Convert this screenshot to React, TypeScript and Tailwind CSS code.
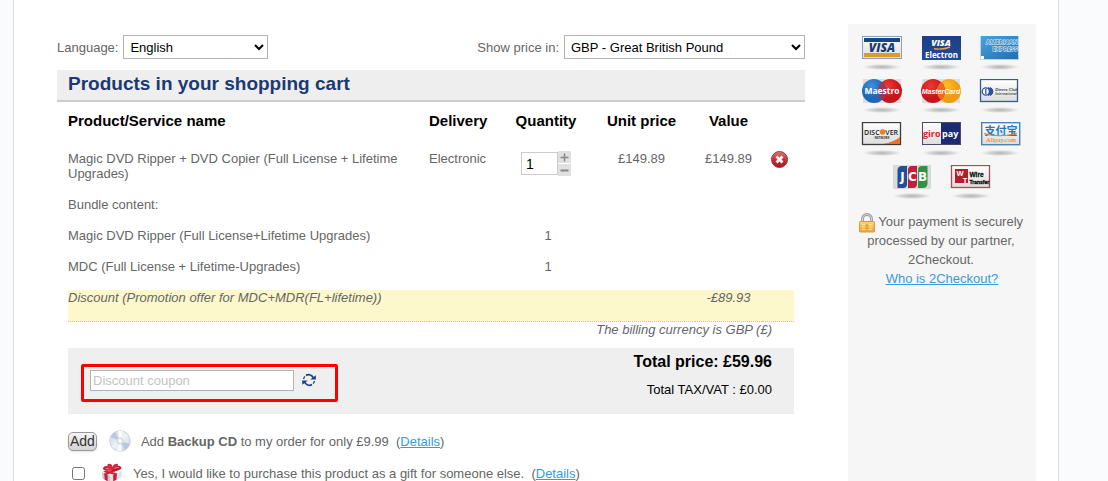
import React from "react";

function CardDefs() {
  return (
    <svg aria-hidden="true" width="0" height="0" className="absolute">
      <defs>
        <radialGradient id="card-shadow">
          <stop offset="0" stopColor="#9a9a9a" stopOpacity="0.75" />
          <stop offset="0.6" stopColor="#b4b4b4" stopOpacity="0.45" />
          <stop offset="1" stopColor="#d0d0d0" stopOpacity="0" />
        </radialGradient>
        <linearGradient id="card-face" x1="0" y1="0" x2="0" y2="1">
          <stop offset="0" stopColor="#ffffff" />
          <stop offset="1" stopColor="#dcdcdc" />
        </linearGradient>
        <linearGradient id="card-navy" x1="0" y1="0" x2="0" y2="1">
          <stop offset="0" stopColor="#1b3f85" />
          <stop offset="1" stopColor="#254a94" />
        </linearGradient>
        <radialGradient id="card-red" cx="0.4" cy="0.3">
          <stop offset="0" stopColor="#f03a34" />
          <stop offset="1" stopColor="#c4161c" />
        </radialGradient>
        <radialGradient id="card-blue" cx="0.4" cy="0.3">
          <stop offset="0" stopColor="#3f90e0" />
          <stop offset="1" stopColor="#1d66b8" />
        </radialGradient>
        <radialGradient id="card-amber" cx="0.4" cy="0.3">
          <stop offset="0" stopColor="#ffbe2e" />
          <stop offset="1" stopColor="#f09a10" />
        </radialGradient>
        <linearGradient id="amex-face" x1="0" y1="0" x2="1" y2="1">
          <stop offset="0" stopColor="#4ba3dd" />
          <stop offset="1" stopColor="#1f6fb4" />
        </linearGradient>
      </defs>
    </svg>
  );
}

function Card({ name, children }: { name: string; children: React.ReactNode }) {
  return (
    <svg role="img" aria-label={name} width="42" height="35" viewBox="0 0 42 35" fontFamily="'Open Sans', sans-serif">
      <ellipse cx="21" cy="31" rx="20" ry="3.2" fill="url(#card-shadow)" />
      {children}
    </svg>
  );
}

function Visa() {
  return (
    <Card name="Visa">
      <rect x="1.5" y="0.5" width="39" height="22" fill="url(#card-face)" stroke="#8e9db8" />
      <rect x="3" y="2" width="36" height="4" fill="#1c4484" />
      <rect x="3" y="17" width="36" height="4" fill="#e39a22" />
      <text x="21" y="15.8" fontSize="12" fontWeight="800" fontStyle="italic" fill="#1c3a72" textAnchor="middle">VISA</text>
    </Card>
  );
}

function VisaElectron() {
  return (
    <Card name="Visa Electron">
      <rect x="2" y="0" width="39" height="24" fill="url(#card-navy)" />
      <text x="21" y="10" fontSize="9" fontWeight="800" fontStyle="italic" fill="#fff" textAnchor="middle">VISA</text>
      <path d="M14 12.8 Q23 14 30 11" stroke="#e8a33a" strokeWidth="1.4" fill="none" />
      <text x="21.5" y="21.8" fontSize="8" fontWeight="700" fill="#fff" textAnchor="middle">Electron</text>
    </Card>
  );
}

function Amex() {
  return (
    <Card name="American Express">
      <rect x="1" y="0" width="39" height="24" fill="#b9d4e8" />
      <rect x="2" y="0" width="37" height="23" fill="url(#amex-face)" />
      <text x="23" y="8" fontSize="6" fontWeight="700" fill="#2f87c6" stroke="#e8f4fc" strokeWidth="0.9" paintOrder="stroke" textAnchor="middle">AMERICAN</text>
      <text x="26" y="15" fontSize="6" fontWeight="700" fill="#2f87c6" stroke="#e8f4fc" strokeWidth="0.9" paintOrder="stroke" textAnchor="middle">EXPRESS</text>
      <rect x="2" y="20" width="3" height="3" fill="#fff" />
    </Card>
  );
}

function Maestro() {
  return (
    <Card name="Maestro">
      <rect x="2" y="0" width="38" height="24" fill="#dedede" />
      <circle cx="29" cy="12" r="12" fill="url(#card-red)" />
      <circle cx="13" cy="12" r="12" fill="url(#card-blue)" />
      <path d="M21 3 A12 12 0 0 1 21 21 A12 12 0 0 1 21 3" fill="#7a4078" />
      <path d="M17.5 6 H24 M17 9 H24.5 M17.5 18 H24" stroke="#d22a30" />
      <text x="21" y="15" fontSize="8.5" fontWeight="700" fill="#fff" textAnchor="middle">Maestro</text>
    </Card>
  );
}

function MasterCard() {
  return (
    <Card name="MasterCard">
      <rect x="2" y="0" width="38" height="24" fill="#dedede" />
      <circle cx="29" cy="12" r="12" fill="url(#card-amber)" />
      <circle cx="13" cy="12" r="12" fill="url(#card-red)" />
      <path d="M21 3 A12 12 0 0 1 21 21 A12 12 0 0 1 21 3" fill="#ec6a22" />
      <text x="21" y="15" fontSize="7" fontWeight="700" fontStyle="italic" fill="#fff" textAnchor="middle" fontFamily="'Liberation Sans', sans-serif">MasterCard</text>
    </Card>
  );
}

function Diners() {
  return (
    <Card name="Diners Club International">
      <rect x="1.5" y="0.5" width="37" height="22" fill="url(#card-face)" stroke="#3a5b92" strokeWidth="1.3" />
      <circle cx="6.8" cy="12.5" r="3.6" fill="#fff" stroke="#2a559c" strokeWidth="1.3" />
      <path d="M6.8 10 V15" stroke="#2a559c" strokeWidth="1.3" />
      <path d="M9.5 8.5 A4.8 4.8 0 0 1 9.5 16.5 Q12 12.5 9.5 8.5 M11 8.5 A4.2 4.2 0 0 1 11 16.5 Z" fill="#2a559c" stroke="#2a559c" />
      <text x="27.5" y="12" fontSize="4" fontStyle="italic" fontWeight="700" fill="#444" textAnchor="middle" fontFamily="'Liberation Sans', sans-serif">Diners Club</text>
      <text x="27" y="16" fontSize="3.6" fontStyle="italic" fontWeight="700" fill="#555" textAnchor="middle" fontFamily="'Liberation Sans', sans-serif">International</text>
    </Card>
  );
}

function Discover() {
  return (
    <Card name="Discover Network">
      <rect x="1.5" y="0.5" width="38" height="22" fill="url(#card-face)" stroke="#3c3c3c" strokeWidth="1.3" />
      <path d="M39 15 Q34 19.5 22 22 H39 Z" fill="#e8742a" />
      <text x="18.6" y="12.5" fontSize="7" fontWeight="600" fill="#222" textAnchor="end">DISC</text>
      <circle cx="21.6" cy="10" r="2.8" fill="#ee7d22" />
      <text x="24.3" y="12.5" fontSize="7" fontWeight="600" fill="#222">VER</text>
      <text x="21" y="16.5" fontSize="3" fontWeight="700" fill="#333" textAnchor="middle">NETWORK</text>
    </Card>
  );
}

function Giropay() {
  return (
    <Card name="giropay">
      <rect x="2.5" y="0.5" width="38" height="22" fill="url(#card-face)" stroke="#4a4a66" />
      <rect x="21" y="1" width="19" height="21" fill="#1c2a72" />
      <text x="20.5" y="15" fontSize="9" fontWeight="700" fill="#dc2430" textAnchor="end">giro</text>
      <text x="22" y="15" fontSize="9" fontWeight="700" fill="#fff">pay</text>
    </Card>
  );
}

function Alipay() {
  return (
    <Card name="Alipay">
      <rect x="2.7" y="0.7" width="38" height="22" fill="url(#card-face)" stroke="#4a82c0" strokeWidth="1.4" />
      <text x="22" y="12.5" fontSize="11" fontWeight="700" fill="#2478c0" textAnchor="middle" fontFamily="'Noto Sans CJK SC', sans-serif">支付宝</text>
      <path d="M5 11.5 Q20 16 38 11.5" stroke="#ee8128" strokeWidth="1.2" fill="none" />
      <text x="22" y="20.3" fontSize="6.5" fill="#e3751e" textAnchor="middle" fontFamily="'Liberation Serif', serif">Alipay.com</text>
    </Card>
  );
}

function Jcb() {
  return (
    <Card name="JCB">
      <rect x="2" y="0" width="38" height="24" fill="#dadada" />
      <path d="M6.5 23 V5 Q7 1 11 1 H16 V19 Q16 23 12 23 Z" fill="#1f4f96" />
      <path d="M17 23 V5 Q17 1 21 1 H26 V19 Q26 23 22 23 Z" fill="#c21f3c" />
      <path d="M27 23 V5 Q27 1 31 1 H36.5 V19 Q36 23 32 23 Z" fill="#2f9440" />
      <g fontSize="12" fontWeight="700" fill="#fff" textAnchor="middle" fontFamily="'DejaVu Sans', sans-serif">
        <text x="11.5" y="16">J</text>
        <text x="21.5" y="16">C</text>
        <text x="31.5" y="16">B</text>
      </g>
    </Card>
  );
}

function WireTransfer() {
  return (
    <Card name="Wire Transfer">
      <rect x="1.5" y="0.5" width="38" height="22" fill="url(#card-face)" stroke="#b04858" strokeWidth="1.3" />
      <rect x="5" y="4" width="13" height="14" fill="#b81c2c" />
      <g fontWeight="700" fontFamily="'Liberation Sans', sans-serif">
        <text x="10" y="11" fontSize="7.5" fill="#fff" textAnchor="middle">W</text>
        <text x="15" y="17.5" fontSize="7.5" fill="#fff" textAnchor="middle">T</text>
        <text x="19.5" y="11.5" fontSize="6.5" fill="#111" stroke="#111" strokeWidth="0.3">Wire</text>
        <text x="19.5" y="18.8" fontSize="5" fill="#111" stroke="#111" strokeWidth="0.3">Transfer</text>
      </g>
    </Card>
  );
}

function LockIcon() {
  return (
    <svg aria-hidden="true" className="-my-1 inline-block align-middle" width="16" height="20" viewBox="0 0 16 20">
      <defs>
        <linearGradient id="lock-body" x1="0" y1="0" x2="0" y2="1">
          <stop offset="0" stopColor="#fbd774" />
          <stop offset="1" stopColor="#eda63c" />
        </linearGradient>
      </defs>
      <path d="M3.5 9 V6.2 A4.5 4.7 0 0 1 12.5 6.2 V9" fill="none" stroke="#9a9d9c" strokeWidth="3" />
      <path d="M3.5 9 V6.2 A4.5 4.7 0 0 1 12.5 6.2 V9" fill="none" stroke="#d2d5d4" strokeWidth="1.2" />
      <rect x="0.5" y="8.5" width="15" height="10.5" rx="0.8" fill="url(#lock-body)" stroke="#dc9a33" />
      <path d="M3 11.5 H6 M3 14 H5.5 M3 16.5 H6 M10 11.5 H13 M10.5 14 H13 M10 16.5 H13" stroke="#f9e29a" />
      <path d="M8 11.5 V16 M7 12.4 H9" stroke="#d99a35" strokeWidth="1.2" />
    </svg>
  );
}

function RemoveIcon() {
  return (
    <svg aria-hidden="true" width="17" height="17" viewBox="0 0 17 17">
      <defs>
        <linearGradient id="remove-ball" x1="0" y1="0" x2="0" y2="1">
          <stop offset="0" stopColor="#d77a7a" />
          <stop offset="0.5" stopColor="#c23338" />
          <stop offset="1" stopColor="#a81820" />
        </linearGradient>
      </defs>
      <circle cx="8.5" cy="8.5" r="8" fill="url(#remove-ball)" stroke="#a8333a" />
      <path d="M5.5 5.5 L11.5 11.5 M11.5 5.5 L5.5 11.5" stroke="#fff" strokeWidth="2.8" />
    </svg>
  );
}

function RefreshIcon() {
  return (
    <svg aria-hidden="true" width="14" height="14" viewBox="0 0 14 14" fill="none" stroke="#1f4080" strokeWidth="1.8">
      <path d="M4 2.4 A5.2 5.2 0 0 1 11.4 5" />
      <path d="M10 11.6 A5.2 5.2 0 0 1 2.6 9" />
      <path d="M8.2 6.4 H13.8 V2.2 Z" fill="#1f4080" stroke="none" />
      <path d="M5.8 7.6 H0.2 V11.8 Z" fill="#1f4080" stroke="none" />
      <path d="M1.6 6 A5.4 5.4 0 0 1 2.8 3.4 M12.4 8 A5.4 5.4 0 0 1 11.2 10.6" strokeWidth="1.4" />
    </svg>
  );
}

function DiscIcon() {
  return (
    <svg aria-hidden="true" width="22" height="22" viewBox="0 0 22 22">
      <defs>
        <linearGradient id="disc-face" x1="0" y1="0" x2="1" y2="1">
          <stop offset="0" stopColor="#c5cfdd" />
          <stop offset="0.5" stopColor="#eef3f8" />
          <stop offset="1" stopColor="#bcc8d8" />
        </linearGradient>
      </defs>
      <circle cx="11" cy="11" r="10.3" fill="url(#disc-face)" stroke="#cdd2d9" />
      <path d="M11 11 L1.5 7 A10 10 0 0 1 6 2 Z M11 11 L20.5 14 A10 10 0 0 1 16 19.8 Z" fill="#a9bddb" opacity="0.7" />
      <path d="M11 11 L9 1 A10 10 0 0 1 14 1.4 Z M11 11 L13 21 A10 10 0 0 1 8 20.6 Z" fill="#fff" opacity="0.9" />
      <circle cx="11" cy="11" r="3.2" fill="#e6ebf1" stroke="#c3cdd9" strokeWidth="0.7" />
      <circle cx="11" cy="11" r="1.4" fill="#fff" />
    </svg>
  );
}

function GiftIcon() {
  return (
    <svg aria-hidden="true" width="22" height="20" viewBox="0 0 22 20">
      <path d="M0.8 9 L9 12.5 V19.5 L1.6 15.5 Z" fill="#c9c3cb" />
      <path d="M9 12.5 L21.5 8.5 L20 15 L9 19.5 Z" fill="#e2e0e6" />
      <path d="M0.8 9 L12 5.5 L21.5 8.5 L9 12.5 Z" fill="#f6f4f7" />
      <path d="M3.2 10 L6.6 11.5 V18.2 L3.8 16.7 Z M12.2 11.5 L16 10.3 L15.4 16.9 L12.2 18.2 Z" fill="#c41f33" />
      <path d="M3.2 10 L14 6 L17 7.2 L6.6 11.5 Z M5 7.6 L16 10.3 L12.2 11.5 L2 8.6 Z" fill="#cf2338" />
      <path d="M10.5 7.5 Q1.5 8.5 2 5 Q3.5 2 8 3.5 Z" fill="#c81d32" />
      <path d="M10.5 7.5 Q12 2.5 16.5 2.6 Q21.5 3.5 20 6 Q17 8.5 10.5 7.5 Z" fill="#b9162b" />
      <path d="M10.5 7.5 Q4.5 2.5 7 1 Q11 0 11.5 4 Q13 0.2 17 1 Q17.5 3.5 10.5 7.5 Z" fill="#d6283d" />
      <path d="M4.5 5.6 Q6.5 4.6 8.5 6.2 M13.5 5.6 Q15.5 4 18 4.6" stroke="#f0a0aa" strokeWidth="0.8" fill="none" />
    </svg>
  );
}

const link = "text-[#3a9ad9] underline";

export default function App() {
  return (
    <div className="h-screen overflow-hidden bg-[#fafbfd] pl-[13px] pr-[49px] font-['Liberation_Sans',Arial,sans-serif] text-[13px] leading-[15px] text-[#666]">
      <div className="flex min-h-full items-start border-x border-[#dcdfe3] bg-white pl-[43px] pr-[22px] pt-6">
        <main className="min-w-0 flex-1 pt-[11px]">
          <div className="flex items-center justify-between">
            <div className="flex items-center gap-[5px]">
              <label htmlFor="language">Language:</label>
              <select id="language" className="h-6 w-[145px] border border-[#b3b3b3] bg-white px-0.5 text-black">
                <option>English</option>
              </select>
            </div>
            <div className="flex items-center gap-[5px]">
              <label htmlFor="currency">Show price in:</label>
              <select id="currency" className="h-6 w-[241px] border border-[#b3b3b3] bg-white px-0.5 text-black">
                <option>GBP - Great British Pound</option>
              </select>
            </div>
          </div>

          <h1 className="mt-[11px] border-b-2 border-[#ccc] bg-[#eee] px-[11px] pb-1 pt-0.5 text-[19px] font-bold leading-6 text-[#1b3975]">
            Products in your shopping cart
          </h1>

          <div className="px-[11px]">
            <table className="w-full table-fixed border-collapse">
              <colgroup>
                <col />
                <col className="w-[75px]" />
                <col className="w-[84px]" />
                <col className="w-[107px]" />
                <col className="w-[67px]" />
                <col className="w-[32px]" />
              </colgroup>
              <thead>
                <tr className="text-[15px] leading-[17px] text-black">
                  <th className="pb-[22px] pt-2.5 text-left">Product/Service name</th>
                  <th className="pb-[22px] pt-2.5 text-left">Delivery</th>
                  <th className="pb-[22px] pt-2.5">Quantity</th>
                  <th className="pb-[22px] pt-2.5">Unit price</th>
                  <th className="pb-[22px] pt-2.5">Value</th>
                  <td />
                </tr>
              </thead>
              <tbody className="align-top">
                <tr>
                  <td className="pb-4 pr-4">Magic DVD Ripper + DVD Copier (Full License + Lifetime Upgrades)</td>
                  <td>Electronic</td>
                  <td>
                    <div className="flex justify-center">
                      <input aria-label="Quantity" defaultValue="1" className="mt-px h-[23px] w-[37px] border border-[#ccc] px-1 text-sm text-black" />
                      <div className="flex flex-col gap-px text-[#888]">
                        <button aria-label="Increase quantity" className="flex h-3 w-[13px] items-center justify-center bg-[#e0e0e0]">
                          <svg width="9" height="9" viewBox="0 0 9 9" stroke="currentColor" strokeWidth="1.5"><path d="M0.5 4.5 H8.5 M4.5 0.5 V8.5" /></svg>
                        </button>
                        <button aria-label="Decrease quantity" className="flex h-3 w-[13px] items-center justify-center bg-[#e0e0e0]">
                          <svg width="9" height="9" viewBox="0 0 9 9" stroke="currentColor" strokeWidth="2"><path d="M0.5 4.5 H8.5" /></svg>
                        </button>
                      </div>
                    </div>
                  </td>
                  <td className="text-center">£149.89</td>
                  <td className="text-center">£149.89</td>
                  <td>
                    <button aria-label="Remove product" className="ml-[9px] block"><RemoveIcon /></button>
                  </td>
                </tr>
                <tr>
                  <td className="pb-4" colSpan={6}>Bundle content:</td>
                </tr>
                <tr>
                  <td className="pb-4" colSpan={2}>Magic DVD Ripper (Full License+Lifetime Upgrades)</td>
                  <td className="pl-1 text-center">1</td>
                  <td colSpan={3} />
                </tr>
                <tr>
                  <td className="pb-4" colSpan={2}>MDC (Full License + Lifetime-Upgrades)</td>
                  <td className="pl-1 text-center">1</td>
                  <td colSpan={3} />
                </tr>
                <tr className="border-b border-dotted border-[#e6cc55] bg-[#fdf7cc] italic">
                  <td className="pb-4" colSpan={4}>Discount (Promotion offer for MDC+MDR(FL+lifetime))</td>
                  <td className="text-center">-£89.93</td>
                  <td />
                </tr>
              </tbody>
            </table>
            <p className="pr-[22px] text-right italic">The billing currency is GBP (£)</p>

            <div className="mt-[11px] flex items-start justify-between bg-[#efefef] pb-3 pl-[13px] pr-[22px]">
              <div className="mt-4 flex h-[38px] w-[257px] items-center gap-2 rounded-[2px] border-[3px] border-[#fe0000] pb-1.5 pl-1.5">
                <input aria-label="Discount coupon" placeholder="Discount coupon" className="h-[21px] w-[204px] border border-[#b3b3b3] bg-white px-0.5 placeholder:text-[#c4c4c4]" />
                <button aria-label="Apply coupon"><RefreshIcon /></button>
              </div>
              <div className="pt-1 text-right text-black">
                <p className="text-base font-bold leading-[19px]">Total price: £59.96</p>
                <p className="mt-[11px]">Total TAX/VAT : £0.00</p>
              </div>
            </div>

            <div className="mt-4 flex h-[22px] items-center">
              <button className="h-[19px] rounded-[5px] border border-[#999] bg-linear-to-b from-[#f4f4f4] to-[#d4d4d4] px-px text-sm leading-4 text-[#333] shadow">Add</button>
              <span className="ml-3"><DiscIcon /></span>
              <p className="ml-2.5">
                Add <b>Backup CD</b> to my order for only £9.99 &nbsp;(<a href="#cd" className={link}>Details</a>)
              </p>
            </div>
            <div className="mt-2.5 flex h-[22px] items-center">
              <input id="gift" type="checkbox" className="ml-1 size-[13px]" />
              <span className="ml-4"><GiftIcon /></span>
              <p className="ml-2.5">
                <label htmlFor="gift">Yes, I would like to purchase this product as a gift for someone else.</label> &nbsp;(<a href="#gift" className={link}>Details</a>)
              </p>
            </div>
          </div>
        </main>

        <aside className="ml-[43px] min-h-[457px] w-[188px] self-stretch bg-[#f6f6f6] pt-3 text-center leading-[19px]">
          <CardDefs />
          <div className="flex flex-wrap justify-center gap-x-[17px] gap-y-2 pl-1 pr-1.5">
            <Visa />
            <VisaElectron />
            <Amex />
            <Maestro />
            <MasterCard />
            <Diners />
            <Discover />
            <Giropay />
            <Alipay />
            <Jcb />
            <WireTransfer />
          </div>
          <p className="mt-3 pl-1.5 pr-2">
            <LockIcon /> Your payment is securely processed by our partner, 2Checkout.
          </p>
          <a href="#2checkout" className={link}>Who is 2Checkout?</a>
        </aside>
      </div>
    </div>
  );
}
